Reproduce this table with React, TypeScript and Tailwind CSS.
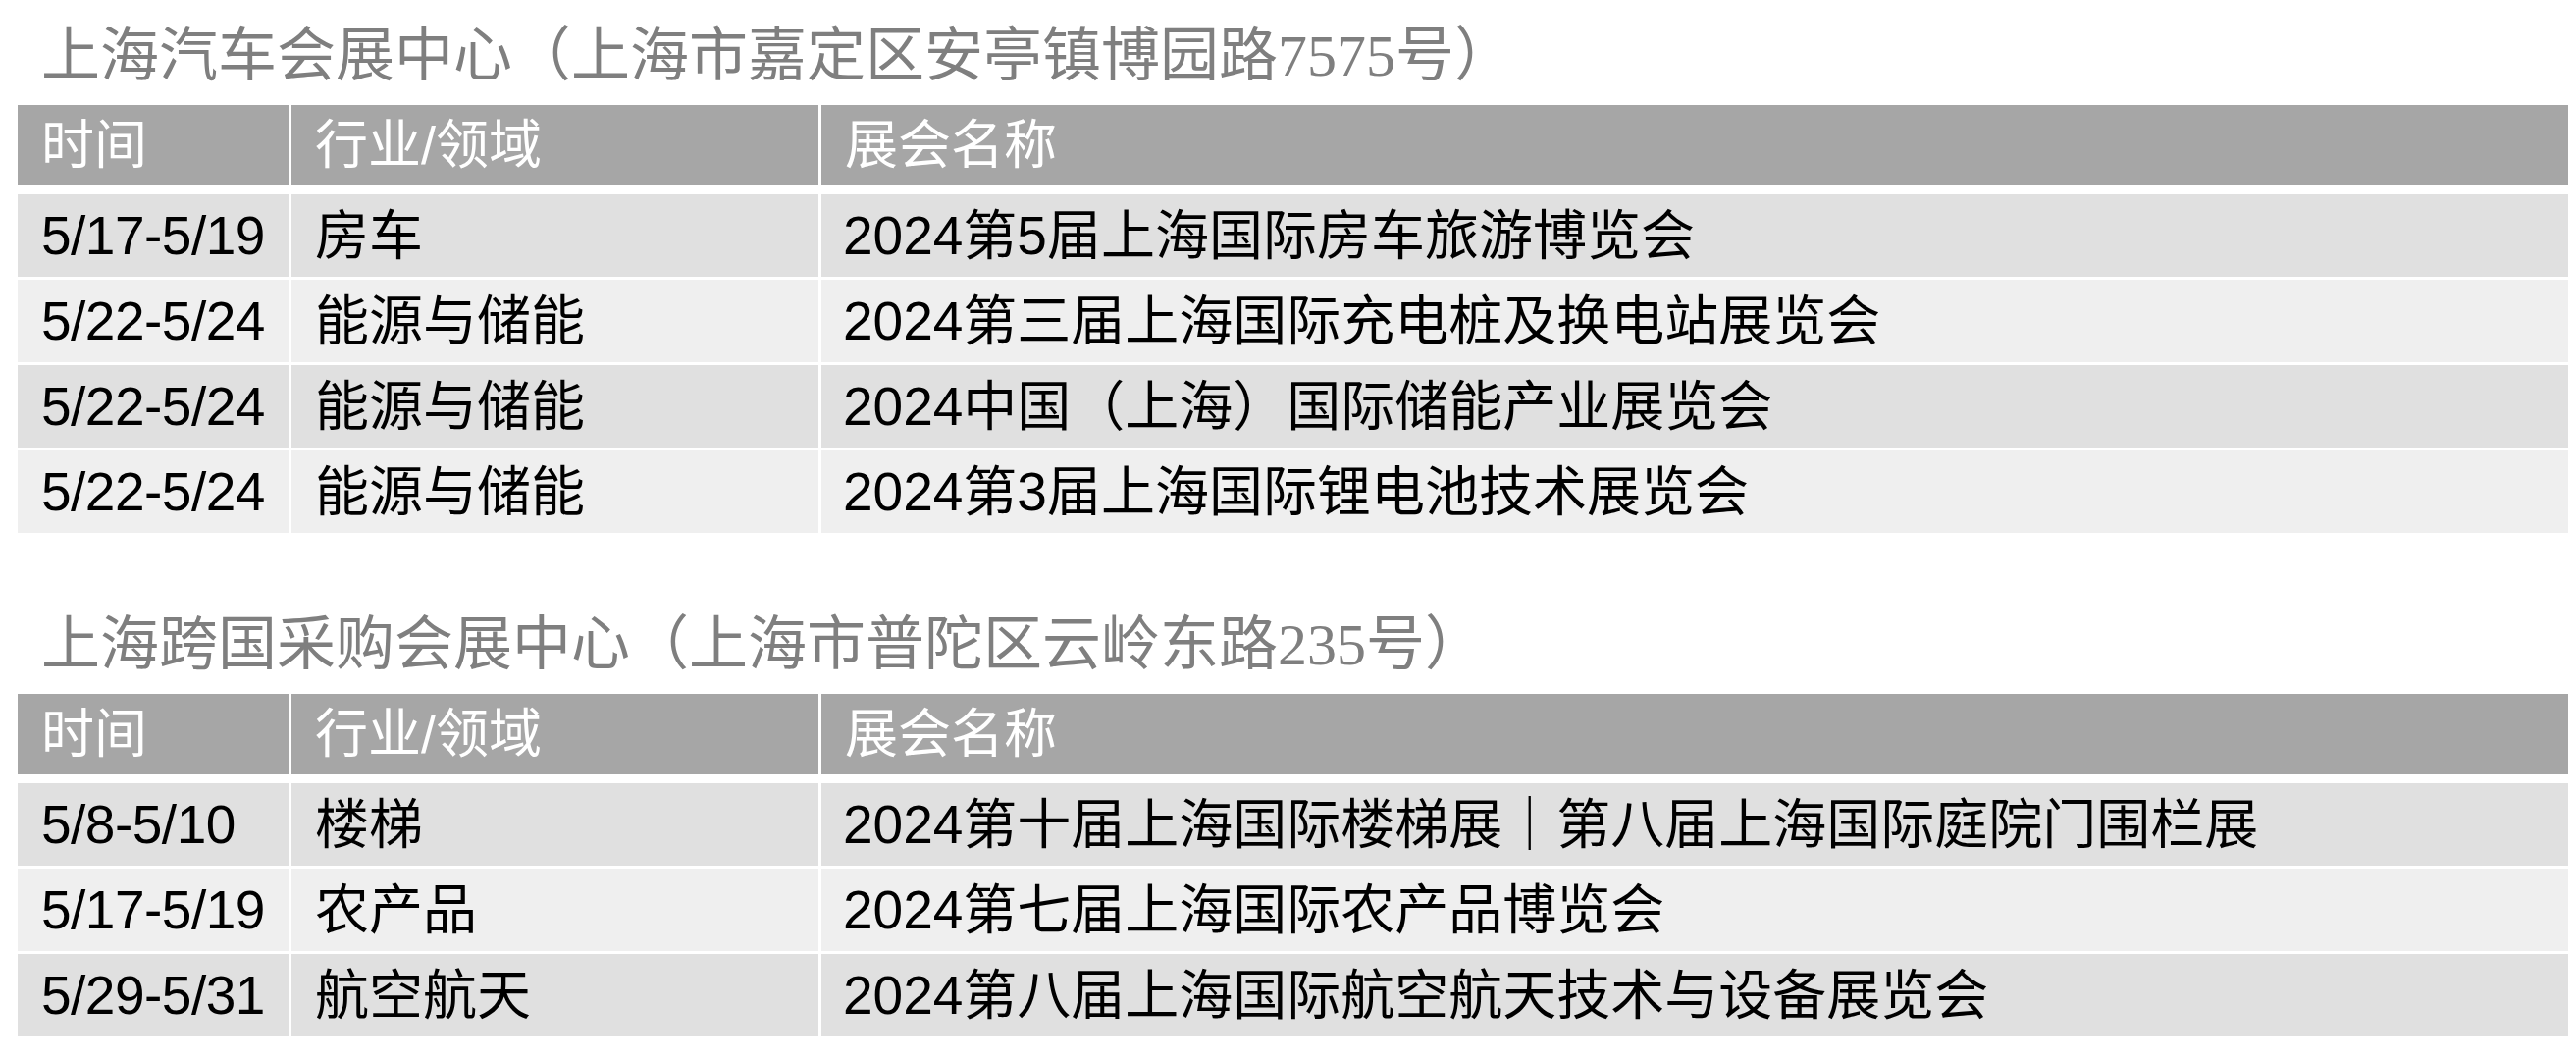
import React from 'react'

type Row = { date: string; field: string; name: string }

const sections: { title: string; rows: Row[] }[] = [
  {
    title: '上海汽车会展中心（上海市嘉定区安亭镇博园路7575号）',
    rows: [
      { date: '5/17-5/19', field: '房车', name: '2024第5届上海国际房车旅游博览会' },
      { date: '5/22-5/24', field: '能源与储能', name: '2024第三届上海国际充电桩及换电站展览会' },
      { date: '5/22-5/24', field: '能源与储能', name: '2024中国（上海）国际储能产业展览会' },
      { date: '5/22-5/24', field: '能源与储能', name: '2024第3届上海国际锂电池技术展览会' },
    ],
  },
  {
    title: '上海跨国采购会展中心（上海市普陀区云岭东路235号）',
    rows: [
      { date: '5/8-5/10', field: '楼梯', name: '2024第十届上海国际楼梯展｜第八届上海国际庭院门围栏展' },
      { date: '5/17-5/19', field: '农产品', name: '2024第七届上海国际农产品博览会' },
      { date: '5/29-5/31', field: '航空航天', name: '2024第八届上海国际航空航天技术与设备展览会' },
    ],
  },
]

const sans = 'font-["Liberation_Sans","Noto_Sans_CJK_SC",sans-serif]'

function Section({ title, rows, first }: { title: string; rows: Row[]; first?: boolean }) {
  return (
    <section className={first ? '' : 'mt-[57px]'}>
      {/* Venue title */}
      <div className="h-[107px] flex items-center pl-[24px] pt-[6px]">
        <h2 className='text-[60px] leading-none text-[#7f7f7f] font-["Liberation_Serif","Noto_Sans_CJK_SC",serif] whitespace-nowrap'>
          {title}
        </h2>
      </div>

      {/* Table */}
      <div className={`grid grid-cols-[276px_537px_1fr] gap-x-[3px] text-[54px] leading-none ${sans}`}>
        {['时间', '行业/领域', '展会名称'].map((h) => (
          <div key={h} className="h-[82px] bg-[#a6a6a6] text-white flex items-center pl-[24px] whitespace-nowrap">
            {h}
          </div>
        ))}
      </div>
      <div className={`mt-[9px] flex flex-col gap-y-[3px] text-[55px] leading-none text-black ${sans}`}>
        {rows.map((r, i) => {
          const bg = i % 2 === 0 ? 'bg-[#e0e0e0]' : 'bg-[#efefef]'
          return (
            <div key={i} className="grid grid-cols-[276px_537px_1fr] gap-x-[3px]">
              <div className={`h-[84px] ${bg} flex items-center pl-[24px] whitespace-nowrap tracking-[-0.5px]`}>{r.date}</div>
              <div className={`h-[84px] ${bg} flex items-center pl-[24px] whitespace-nowrap`}>{r.field}</div>
              <div className={`h-[84px] ${bg} flex items-center pl-[22px] whitespace-nowrap`}>{r.name}</div>
            </div>
          )
        })}
      </div>
    </section>
  )
}

export default function App() {
  return (
    <div className="w-[2625px] h-[1080px] bg-white overflow-hidden pl-[18px] pr-[8px]">
      {sections.map((s, i) => (
        <Section key={s.title} title={s.title} rows={s.rows} first={i === 0} />
      ))}
    </div>
  )
}
